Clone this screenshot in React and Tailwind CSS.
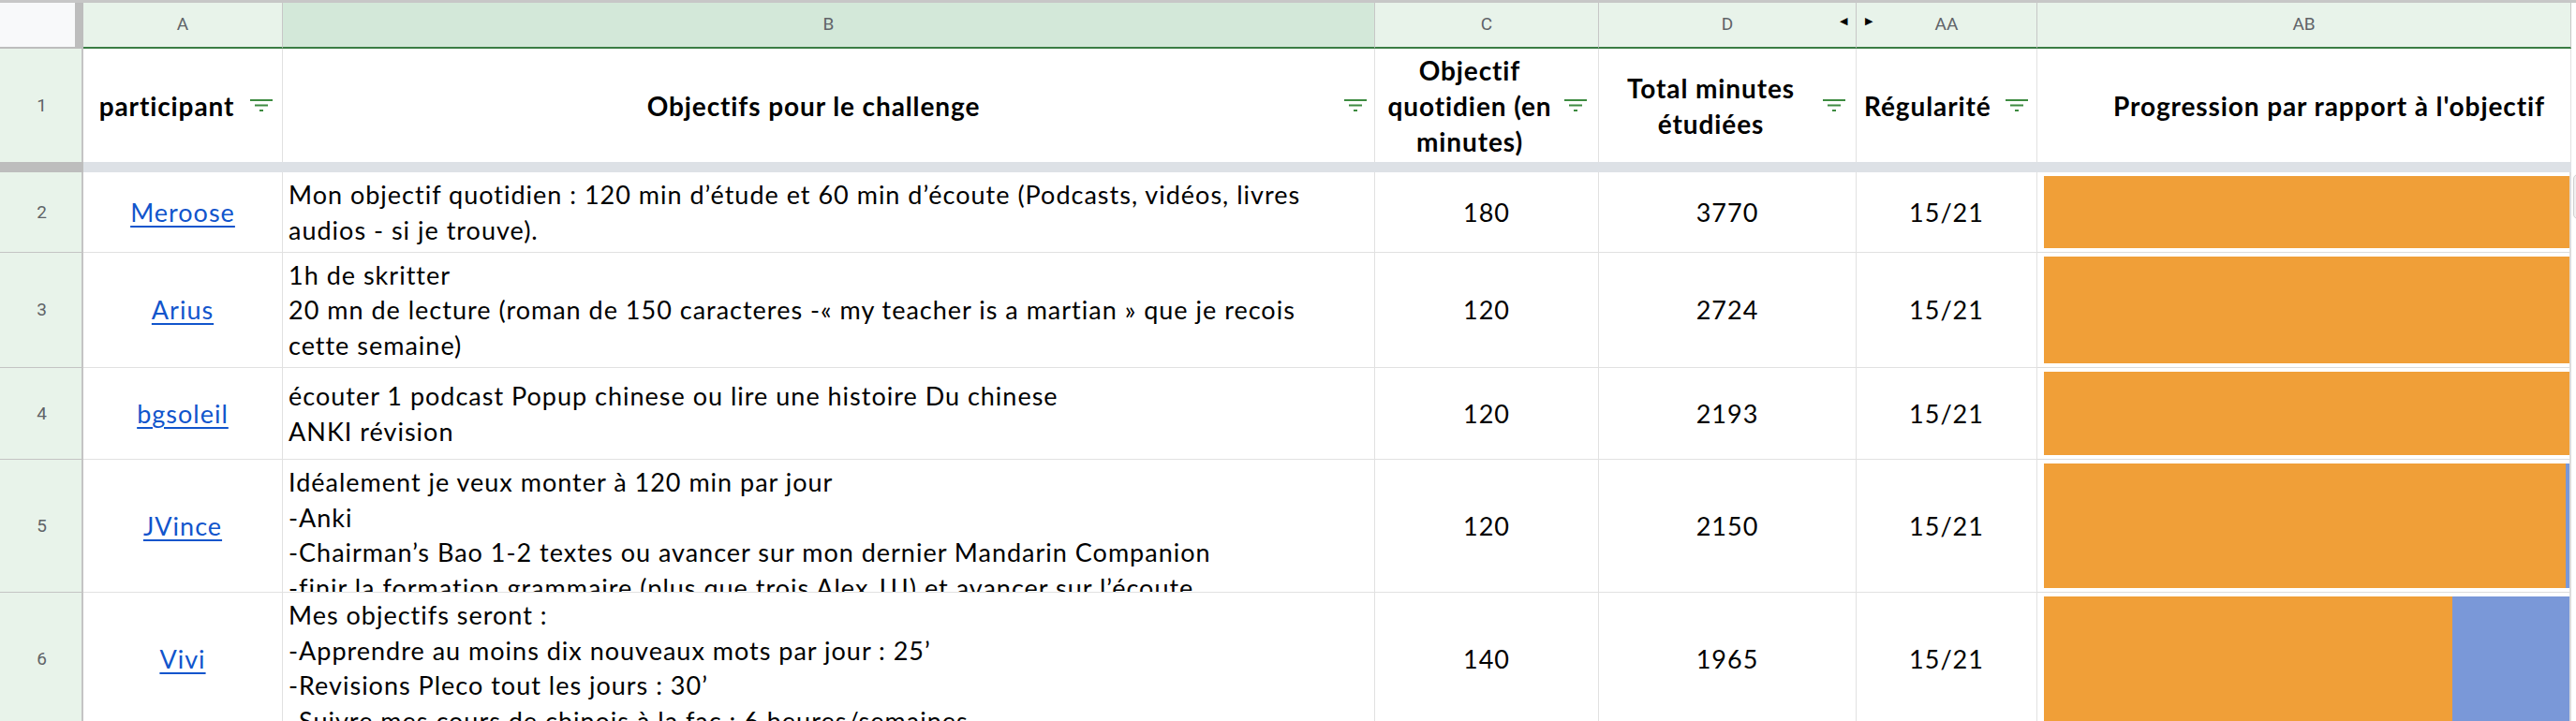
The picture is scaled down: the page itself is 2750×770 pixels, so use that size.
import React from 'react';

const COLS = 'grid grid-cols-[89px_213px_1166px_239px_275px_193px_570px_1fr]';
const FONT = { fontFamily: 'Lato, "Open Sans", sans-serif' };

const FilterIcon = () => (
  <svg width="24" height="13" viewBox="0 0 24 13" className="shrink-0">
    <rect x="0" y="0" width="24" height="2" fill="#3d8b40" />
    <rect x="5" y="5.5" width="14" height="2" fill="#3d8b40" />
    <rect x="10" y="11" width="4" height="2" fill="#3d8b40" />
  </svg>
);

const rows = [
  {
    n: 2,
    name: 'Meroose',
    h: 'h-[86px]',
    lines: [
      'Mon objectif quotidien : 120 min d’étude et 60 min d’écoute (Podcasts, vidéos, livres',
      'audios - si je trouve).',
    ],
    daily: 180,
    total: 3770,
    bar: 100,
  },
  {
    n: 3,
    name: 'Arius',
    h: 'h-[123px]',
    lines: [
      '1h de skritter',
      '20 mn de lecture (roman de 150 caracteres -« my teacher is a martian » que je recois',
      'cette semaine)',
    ],
    daily: 120,
    total: 2724,
    bar: 100,
  },
  {
    n: 4,
    name: 'bgsoleil',
    h: 'h-[98px]',
    lines: ['écouter 1 podcast Popup chinese ou lire une histoire Du chinese', 'ANKI révision'],
    daily: 120,
    total: 2193,
    bar: 100,
  },
  {
    n: 5,
    name: 'JVince',
    h: 'h-[142px]',
    top: true,
    lines: [
      'Idéalement je veux monter à 120 min par jour',
      '-Anki',
      '-Chairman’s Bao 1-2 textes ou avancer sur mon dernier Mandarin Companion',
      '-finir la formation grammaire (plus que trois Alex JJJ) et avancer sur l’écoute',
    ],
    daily: 120,
    total: 2150,
    bar: 99.3,
  },
  {
    n: 6,
    name: 'Vivi',
    h: 'h-[142px]',
    top: true,
    lines: [
      'Mes objectifs seront :',
      '-Apprendre au moins dix nouveaux mots par jour : 25’',
      '-Revisions Pleco tout les jours : 30’',
      '-Suivre mes cours de chinois à la fac : 6 heures/semaines',
      '-Lecture',
    ],
    daily: 140,
    total: 1965,
    bar: 77.7,
  },
];

const App = () => {
  return (
    <div className="h-[770px] w-[2750px] overflow-hidden bg-white text-black" style={FONT}>
      {/* column letters */}
      <div className={`${COLS} h-[52px] border-t-[3px] border-[#c7c7c7] text-[19px] text-[#5f6368]`} style={{ fontFamily: 'Roboto, sans-serif' }}>
        <div className="border-r-[9px] border-b-2 border-[#bdbdbd] bg-[#f8f9fa]" />
        <div className="flex items-center justify-center border-r border-b-2 border-r-[#c7c7c7] border-b-[#3a7d44] bg-[#e8f3ea]">A</div>
        <div className="flex items-center justify-center border-r border-b-2 border-r-[#c7c7c7] border-b-[#3a7d44] bg-[#d3e8d9]">B</div>
        <div className="flex items-center justify-center border-r border-b-2 border-r-[#c7c7c7] border-b-[#3a7d44] bg-[#e8f3ea]">C</div>
        <div className="relative flex items-center justify-center border-r border-b-2 border-r-[#c7c7c7] border-b-[#3a7d44] bg-[#e8f3ea]">
          D
          <span className="absolute right-[9px] top-[12px] text-[11px] text-black">◀</span>
        </div>
        <div className="relative flex items-center justify-center border-r border-b-2 border-r-[#c7c7c7] border-b-[#3a7d44] bg-[#e8f3ea]">
          <span className="absolute left-[9px] top-[12px] text-[11px] text-black">▶</span>
          AA
        </div>
        <div className="flex items-center justify-center border-r border-b-2 border-r-[#c7c7c7] border-b-[#3a7d44] bg-[#e8f3ea]">AB</div>
        <div className="bg-white" />
      </div>

      {/* header row */}
      <div className={`${COLS} h-[121px] text-[28px] font-bold leading-[38px] tracking-[0.9px]`}>
        <div className="flex items-center justify-center border-r-2 border-[#c4c4c4] bg-[#e8f3ea] pl-[2px] text-[19px] font-normal tracking-normal text-[#5f6368]" style={{ fontFamily: 'Roboto, sans-serif' }}>1</div>
        <div className="flex items-center border-r border-[#e1e1e1] pr-[10px]">
          <span className="flex-1 text-center">participant</span>
          <FilterIcon />
        </div>
        <div className="flex items-center border-r border-[#e1e1e1] pr-[8px]">
          <span className="flex-1 text-center">Objectifs pour le challenge</span>
          <FilterIcon />
        </div>
        <div className="flex items-center border-r border-[#e1e1e1] pr-[12px]">
          <span className="flex-1 text-center">Objectif<br />quotidien (en<br />minutes)</span>
          <FilterIcon />
        </div>
        <div className="flex items-center border-r border-[#e1e1e1] pr-[11px]">
          <span className="flex-1 text-center">Total minutes<br />étudiées</span>
          <FilterIcon />
        </div>
        <div className="flex items-center border-r border-[#e1e1e1] pr-[9px]">
          <span className="flex-1 whitespace-nowrap pl-[8px] text-left">Régularité</span>
          <FilterIcon />
        </div>
        <div className="flex items-center justify-center border-r border-[#e1e1e1] pl-[54px]">
          <span className="whitespace-nowrap">Progression par rapport à l'objectif</span>
        </div>
        <div />
      </div>

      {/* frozen divider */}
      <div className="flex h-[11px]">
        <div className="w-[89px] bg-[#bdbdbd]" />
        <div className="w-[2656px] bg-[#dde1e6]" />
      </div>

      {rows.map((r) => (
        <div key={r.n} className={`${COLS} ${r.h} text-[27px] leading-[37.5px] tracking-[1px]`}>
          <div className="flex items-center justify-center border-r-2 border-b border-[#c4c4c4] bg-[#e8f3ea] pl-[2px] text-[19px] tracking-normal text-[#5f6368]" style={{ fontFamily: 'Roboto, sans-serif' }}>
            {r.n}
          </div>
          <div className="flex items-center justify-center border-r border-b border-[#e1e1e1]">
            <a className="text-[#1155cc] underline underline-offset-[4px]">{r.name}</a>
          </div>
          <div className={`flex flex-col overflow-hidden border-r border-b border-[#e1e1e1] pl-[6px] ${r.top ? 'justify-start pt-[5px]' : 'justify-center'}`}>
            {r.lines.map((l, i) => (
              <div key={i} className="whitespace-nowrap">{l}</div>
            ))}
          </div>
          <div className="flex items-center justify-center border-r border-b border-[#e1e1e1]">{r.daily}</div>
          <div className="flex items-center justify-center border-r border-b border-[#e1e1e1]">{r.total}</div>
          <div className="flex items-center justify-center border-r border-b border-[#e1e1e1]">15/21</div>
          <div className="flex border-r-2 border-b border-[#dcdcdc] py-[4px] pl-[7px]">
            <div className="flex flex-1 bg-[#7a98d8]">
              <div className="h-full bg-[#f09f38]" style={{ width: `${r.bar}%` }} />
            </div>
          </div>
          <div className="relative bg-white">
            {r.n === 2 && <div className="absolute left-[2px] top-[2px] h-[48px] w-[10px] rounded-l-[5px] border border-[#d0d0d0] bg-[#f1f1f1]" />}
          </div>
        </div>
      ))}
    </div>
  );
};

export default App;
